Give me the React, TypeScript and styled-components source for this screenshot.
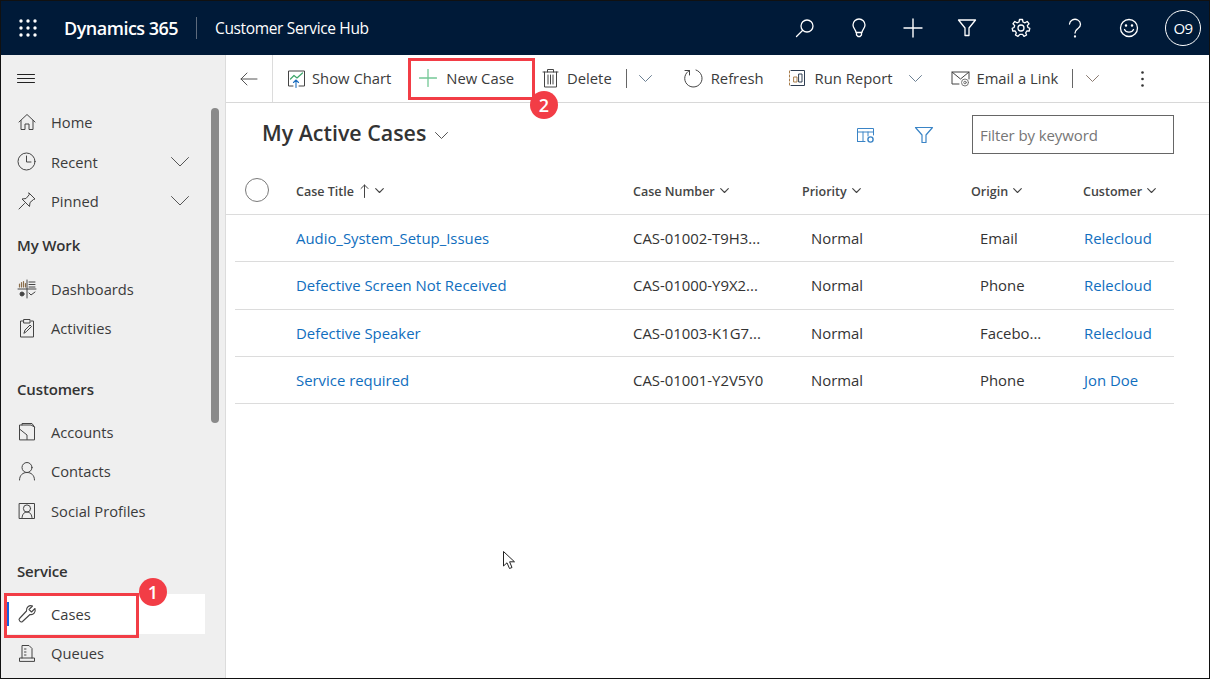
import { ReactNode } from 'react';
import styled, { createGlobalStyle } from 'styled-components';

const GlobalStyle = createGlobalStyle`
    html, body { margin: 0; padding: 0; background: #fff; }
    body { font-family: "Open Sans", "Noto Sans", "Liberation Sans", sans-serif; color: #333; }
    * { box-sizing: border-box; }
`;

// Estrutura geral
const Frame = styled.div`
    position: relative;
    width: 1210px;
    height: 679px;
    border: 1px solid #111;
    overflow: hidden;
    display: flex;
    flex-direction: column;
`;

const Header = styled.header`
    height: 54px;
    flex: none;
    background: #001a38;
    color: #fff;
    display: flex;
    align-items: center;
`;

const Waffle = styled.div`
    width: 63px;
    padding-left: 18px;
    display: flex;
`;

const Brand = styled.div`
    font-size: 18px;
    font-weight: 600;
    letter-spacing: -0.5px;
    width: 132px;
`;

const HeaderDivider = styled.div`
    width: 1px;
    height: 22px;
    background: #5d6a7c;
`;

const AppName = styled.div`
    font-size: 15.5px;
    margin-left: 18px;
    letter-spacing: -0.35px;
    flex: 1;
`;

const HeaderButton = styled.div`
    width: 54px;
    height: 54px;
    display: flex;
    align-items: center;
    justify-content: center;
`;

const Avatar = styled.div`
    width: 36px;
    height: 36px;
    margin: 0 8px 0 9px;
    border: 1px solid #fff;
    border-radius: 50%;
    display: flex;
    align-items: center;
    justify-content: center;
    font-size: 15px;
    letter-spacing: -0.5px;
`;

const Body = styled.div`
    flex: 1;
    display: flex;
    min-height: 0;
`;

// Menu lateral
const Sidebar = styled.nav`
    position: relative;
    width: 225px;
    flex: none;
    background: #efefef;
    border-right: 1px solid #dcdcdc;
    overflow: hidden;
`;

const Hamburger = styled.div`
    height: 47.6px;
    padding-left: 16px;
    display: flex;
    align-items: center;
`;

const Scrollbar = styled.div`
    position: absolute;
    left: 210px;
    top: 53px;
    width: 8px;
    height: 315px;
    border-radius: 4px;
    background: #8a8a8a;
`;

const SectionTitle = styled.div<{ $gap?: number }>`
    height: 48.4px;
    margin-top: ${p => p.$gap ?? 0}px;
    padding: 1px 0 0 16px;
    display: flex;
    align-items: center;
    font-size: 15px;
    font-weight: 600;
    letter-spacing: -0.15px;
    color: #333;
`;

const NavRow = styled.div<{ $active?: boolean }>`
    position: relative;
    height: 39.4px;
    width: 199px;
    margin-left: 5px;
    padding-left: 11px;
    display: flex;
    align-items: center;
    font-size: 14.7px;
    color: #3b3b3b;
    background: ${p => (p.$active ? '#fff' : 'transparent')};
    &::before {
        content: '';
        display: ${p => (p.$active ? 'block' : 'none')};
        position: absolute;
        left: 1px;
        top: 8px;
        bottom: 8px;
        width: 2px;
        background: #1160e0;
    }
`;

const NavIcon = styled.span`
    width: 20px;
    height: 20px;
    margin-right: 14px;
    display: flex;
    align-items: center;
    justify-content: center;
`;

const NavChevron = styled.span`
    position: absolute;
    left: 165px;
    top: 15px;
    display: flex;
`;

// Área principal
const Main = styled.main`
    flex: 1;
    min-width: 0;
`;

const Toolbar = styled.div`
    height: 48px;
    border-bottom: 1px solid #d8d8d8;
    display: flex;
    align-items: center;
`;

const BackCell = styled.div`
    width: 47px;
    height: 47px;
    border-right: 1px solid #dcdcdc;
    display: flex;
    align-items: center;
    justify-content: center;
    flex: none;
`;

const ToolItem = styled.div<{ $left: number; $gap: number }>`
    margin: 0 0 1px ${p => p.$left}px;
    display: flex;
    align-items: center;
    gap: ${p => p.$gap}px;
    font-size: 14.8px;
    color: #3b3b3b;
    white-space: nowrap;
    flex: none;
`;

const ToolSeparator = styled.div<{ $left: number }>`
    width: 1px;
    height: 19px;
    margin-left: ${p => p.$left}px;
    background: #666;
    flex: none;
`;

const ToolIcon = styled.span<{ $left: number }>`
    margin-left: ${p => p.$left}px;
    display: flex;
    flex: none;
`;

const ViewBar = styled.div`
    height: 63px;
    padding: 0 35px 0 36px;
    display: flex;
    align-items: center;
`;

const ViewTitle = styled.h1`
    margin: -5px 0 0;
    font-size: 21.4px;
    font-weight: 600;
    color: #333;
`;

const ViewChevron = styled.span`
    margin: 2px 0 0 9px;
    display: flex;
    flex: 1;
`;

const ViewAction = styled.span<{ $right: number }>`
    margin-right: ${p => p.$right}px;
    display: flex;
`;

const FilterBox = styled.div`
    width: 202px;
    height: 39px;
    border: 1px solid #666;
    padding-left: 7px;
    display: flex;
    align-items: center;
    font-size: 15px;
    letter-spacing: -0.1px;
    color: #767676;
`;

// Tabela
const columns = '61px 337px 169px 169px 112px 91px';

const HeadRow = styled.div`
    height: 49px;
    padding-left: 9px;
    border-bottom: 1px solid #dcdcdc;
    display: grid;
    grid-template-columns: ${columns};
    align-items: center;
`;

const HeadCheck = styled.div`
    width: 24px;
    height: 24px;
    margin-left: 10px;
    border: 1px solid #7a7a7a;
    border-radius: 50%;
`;

const HeadCell = styled.div<{ $gap?: number }>`
    padding-top: 2px;
    display: flex;
    align-items: center;
    gap: ${p => p.$gap ?? 5}px;
    font-size: 12.5px;
    font-weight: 600;
    color: #444;
`;

const DataRow = styled.div`
    height: 47.3px;
    margin-left: 9px;
    width: 939px;
    border-bottom: 1px solid #dcdcdc;
    display: grid;
    grid-template-columns: ${columns};
    align-items: center;
    font-size: 14.9px;
    color: #333;
`;

const Cell = styled.div<{ $indent?: number }>`
    padding-left: ${p => p.$indent ?? 0}px;
    white-space: nowrap;
`;

const LinkCell = styled(Cell)`
    color: #106ebe;
`;

// Marcações sobre o print
const Callout = styled.div<{ $x: number; $y: number; $w: number; $h: number }>`
    position: absolute;
    left: ${p => p.$x}px;
    top: ${p => p.$y}px;
    width: ${p => p.$w}px;
    height: ${p => p.$h}px;
    border: 3px solid #f23d46;
`;

const Badge = styled.div<{ $x: number; $y: number }>`
    position: absolute;
    left: ${p => p.$x}px;
    top: ${p => p.$y}px;
    width: 28px;
    height: 28px;
    border-radius: 50%;
    background: #f23d46;
    color: #fff;
    display: flex;
    align-items: center;
    justify-content: center;
    font-size: 18px;
    font-weight: 600;
`;

const Pointer = styled.svg`
    position: absolute;
    left: 501px;
    top: 549px;
`;

// Ícones
type GlyphProps = { size?: number; w?: number; h?: number; color?: string; stroke?: number; children: ReactNode };

function Glyph({ size = 20, w, h, color = '#444', stroke = 1, children }: GlyphProps) {
    const width = w ?? size;
    const height = h ?? size;
    return (
        <svg width={width} height={height} viewBox={`0 0 ${width} ${height}`} fill="none" stroke={color} strokeWidth={stroke} strokeLinecap="round" strokeLinejoin="round">
            {children}
        </svg>
    );
}

const Chevron = ({ w = 18, color = '#555' }: { w?: number; color?: string }) => (
    <Glyph w={w} h={w / 2 + 1} color={color}>
        <path d={`M0.5 0.5L${w / 2} ${w / 2}L${w - 0.5} 0.5`} />
    </Glyph>
);

const SmallCaret = () => (
    <Glyph w={9} h={6} color="#444" stroke={1.1}>
        <path d="M0.7 0.7L4.5 4.5L8.3 0.7" />
    </Glyph>
);

const WaffleIcon = () => (
    <svg width="18" height="18" viewBox="0 0 18 18" fill="#fff">
        {[2, 9, 16].map(y => [2, 9, 16].map(x => <circle key={`${x}-${y}`} cx={x} cy={y} r="1.7" />))}
    </svg>
);

const icons = {
    home: <Glyph><path d="M2 10L10 2.5L18 10M4 8.5V17.5H8V12H12V17.5H16V8.5" /></Glyph>,
    clock: <Glyph><circle cx="9.5" cy="9.5" r="8.5" /><path d="M9.5 4V10H14" /></Glyph>,
    pin: <Glyph><path d="M12 2L18 8L16.5 8.5L13 11.5L12.5 15.5L5 8L9 7.5L12 4ZM7.5 12.5L2 18" /></Glyph>,
    dashboards: (
        <Glyph>
            <path d="M10 1V19M1 10H19M12 3H18M12 5.5H18M12 8H18" />
            <path d="M2.5 8V5M4.5 8V3.5M6.5 8V2.5M8.5 8V4.5" stroke="#8a6d4b" strokeWidth="1.2" />
            <circle cx="5" cy="15" r="2" fill="#444" />
            <path d="M12 14L14 16L18 13" />
        </Glyph>
    ),
    activities: <Glyph><path d="M6 3H3.5V19H16.5V3H14M7 1.5H13V5H7ZM7 15L8 12L13 7L14.5 8.5L9.5 13.5Z" /></Glyph>,
    accounts: <Glyph><path d="M2.5 17.5V3H14L17.5 5V17.5ZM2.5 7L10 13V17.5M5 3V1.5H15L17.5 5" /></Glyph>,
    contacts: <Glyph><circle cx="10" cy="6.5" r="5" /><path d="M2.5 19C2.5 14 6 11.5 10 11.5S17.5 14 17.5 19" /></Glyph>,
    social: <Glyph><rect x="2.5" y="2.5" width="15" height="15" /><circle cx="10" cy="7.5" r="3.6" /><path d="M5 17.5C5 13.5 7 11 10 11S15 13.5 15 17.5" /></Glyph>,
    wrench: <Glyph stroke={1.1}><path d="M18 4.5L14.5 8L12 5.5L15.5 2C12.5 0.8 9 3 9.5 7L2.5 14.5C1 16 3.8 19 5.5 17.5L13 10.5C16.5 11.2 19 8 18 4.5Z" /></Glyph>,
    queues: <Glyph><path d="M5 15V2.5H12L15 5.5V15M2.5 18V15H17.5V18ZM7.5 6H9M7.5 9H9M7.5 12H9" /></Glyph>,
    showChart: (
        <Glyph w={19} h={19}>
            <path d="M6 17H1.5V2H17.5V17H12" />
            <path d="M3.5 10L7 6.5L10 9L15.5 4" stroke="#3fa66b" strokeWidth="1.2" />
            <path d="M9 18.5V11M6.5 13.5L9 11L11.5 13.5" stroke="#1f6fc0" strokeWidth="1.1" />
        </Glyph>
    ),
    trash: <Glyph w={17} h={20}><path d="M1 4H16M5.5 4V1.5H11.5V4M2.5 4V19H14.5V4M6 7V16M8.5 7V16M11 7V16" /></Glyph>,
    refresh: <Glyph><path d="M6.5 2.5A8.7 8.7 0 1 0 13 2M6.5 7V2.5H2" /></Glyph>,
    report: (
        <Glyph w={18} h={18}>
            <path d="M3 1.5H16.5V16.5H3" stroke="#2f3e52" />
            <path d="M1.5 2V16" strokeDasharray="2 2" stroke="#a87c4a" />
            <rect x="6" y="8" width="3" height="5" stroke="#a87c4a" />
            <rect x="11" y="5" width="3" height="8" stroke="#2f3e52" />
        </Glyph>
    ),
    email: (
        <Glyph w={19} h={17}>
            <path d="M8 14H1V2H18V9M1 2L9.5 9L18 2" />
            <circle cx="14" cy="12.5" r="3.5" stroke="#777" />
            <circle cx="14" cy="12.5" r="1.3" stroke="#777" />
        </Glyph>
    ),
    tableSettings: (
        <Glyph w={19} h={18} color="#3a84c6">
            <path d="M1.5 15.5V2.5H17.5V9M1.5 6H17.5M1.5 15.5H9M7 6V15.5M12 6V10" />
            <circle cx="14.5" cy="13.5" r="2.6" strokeWidth="1.4" />
        </Glyph>
    ),
};

const navGroups = [
    { items: [['Home', icons.home], ['Recent', icons.clock, true], ['Pinned', icons.pin, true]] },
    { title: 'My Work', items: [['Dashboards', icons.dashboards], ['Activities', icons.activities]] },
    { title: 'Customers', gap: 16, items: [['Accounts', icons.accounts], ['Contacts', icons.contacts], ['Social Profiles', icons.social]] },
    { title: 'Service', gap: 15.4, items: [['Cases', icons.wrench], ['Queues', icons.queues]] },
] as { title?: string; gap?: number; items: [string, ReactNode, boolean?][] }[];

const cases = [
    ['Audio_System_Setup_Issues', 'CAS-01002-T9H3...', 'Normal', 'Email', 'Relecloud'],
    ['Defective Screen Not Received', 'CAS-01000-Y9X2...', 'Normal', 'Phone', 'Relecloud'],
    ['Defective Speaker', 'CAS-01003-K1G7...', 'Normal', 'Facebo...', 'Relecloud'],
    ['Service required', 'CAS-01001-Y2V5Y0', 'Normal', 'Phone', 'Jon Doe'],
];

export default function App() {
    return (
        <Frame>
            <GlobalStyle />
            <Header>
                <Waffle><WaffleIcon /></Waffle>
                <Brand>Dynamics 365</Brand>
                <HeaderDivider />
                <AppName>Customer Service Hub</AppName>
                <HeaderButton>
                    <Glyph color="#fff" stroke={1.3}><circle cx="12" cy="8" r="6" /><path d="M7.5 12.5L1.5 18.5" /></Glyph>
                </HeaderButton>
                <HeaderButton>
                    <Glyph color="#fff" stroke={1.3}><path d="M7 14.5C7 11.5 4 10.5 4 7A6 6 0 0 1 16 7C16 10.5 13 11.5 13 14.5ZM7.5 14.5V17L9 18.5H11L12.5 17V14.5" /></Glyph>
                </HeaderButton>
                <HeaderButton>
                    <Glyph color="#fff" stroke={1.4}><path d="M10 1V19M1 10H19" /></Glyph>
                </HeaderButton>
                <HeaderButton>
                    <Glyph color="#fff" stroke={1.3}><path d="M1.5 2H18.5L12 10V17.5H8V10Z" /></Glyph>
                </HeaderButton>
                <HeaderButton>
                    <Glyph color="#fff" stroke={1.3}>
                        <circle cx="10" cy="10" r="3" />
                        <path d="M8.5 1.5H11.5L12 4L14 4.8L16.2 3.5L18 5.7L16.3 7.6L17 9.5L18.8 10.3L18.2 13L15.8 13L14.7 14.9L15.6 17L13 18.3L11.6 16.4H8.9L7 18.3L4.4 17L5.3 14.9L4.2 13L1.8 13L1.2 10.3L3 9.5L3.7 7.6L2 5.7L3.8 3.5L6 4.8L8 4Z" />
                    </Glyph>
                </HeaderButton>
                <HeaderButton>
                    <Glyph color="#fff" stroke={1.3}>
                        <path d="M4.5 6A5.5 5 0 1 1 13 10.5C11 12 10 12.5 10 15" />
                        <circle cx="10" cy="18.5" r="0.5" fill="#fff" />
                    </Glyph>
                </HeaderButton>
                <HeaderButton>
                    <Glyph color="#fff" stroke={1.3}><circle cx="10" cy="10" r="8.5" /><path d="M5.5 11.5C7 15 13 15 14.5 11.5" /><circle cx="7" cy="7.5" r="0.6" fill="#fff" /><circle cx="13" cy="7.5" r="0.6" fill="#fff" /></Glyph>
                </HeaderButton>
                <Avatar>O9</Avatar>
            </Header>
            <Body>
                <Sidebar>
                    <Hamburger>
                        <Glyph w={18} h={9} color="#222"><path d="M0.5 0.5H17.5M0.5 4.5H17.5M0.5 8.5H17.5" /></Glyph>
                    </Hamburger>
                    {navGroups.map((group, i) => (
                        <div key={i}>
                            {group.title && <SectionTitle $gap={group.gap}>{group.title}</SectionTitle>}
                            {group.items.map(([label, icon, expandable]) => (
                                <NavRow key={label} $active={label === 'Cases'}>
                                    <NavIcon>{icon}</NavIcon>
                                    {label}
                                    {expandable && <NavChevron><Chevron /></NavChevron>}
                                </NavRow>
                            ))}
                        </div>
                    ))}
                    <Scrollbar />
                </Sidebar>
                <Main>
                    <Toolbar>
                        <BackCell>
                            <Glyph w={18} h={14} color="#555"><path d="M17 7H1M7 1L1 7L7 13" /></Glyph>
                        </BackCell>
                        <ToolItem $left={14} $gap={6}>{icons.showChart}Show Chart</ToolItem>
                        <ToolItem $left={28} $gap={9}>
                            <Glyph w={18} h={18} color="#74c896" stroke={1.3}><path d="M9 0.5V17.5M0.5 9H17.5" /></Glyph>
                            New Case
                        </ToolItem>
                        <ToolItem $left={28} $gap={8}>{icons.trash}Delete</ToolItem>
                        <ToolSeparator $left={14} />
                        <ToolIcon $left={12}><Chevron w={13} color="#6b7f92" /></ToolIcon>
                        <ToolItem $left={31} $gap={8}>{icons.refresh}Refresh</ToolItem>
                        <ToolItem $left={24} $gap={9}>{icons.report}Run Report</ToolItem>
                        <ToolIcon $left={17}><Chevron w={13} color="#6b7f92" /></ToolIcon>
                        <ToolItem $left={29} $gap={6}>{icons.email}Email a Link</ToolItem>
                        <ToolSeparator $left={14} />
                        <ToolIcon $left={13}><Chevron w={13} color="#8a7a70" /></ToolIcon>
                        <ToolIcon $left={42}>
                            <svg width="3" height="16" viewBox="0 0 3 16" fill="#333"><circle cx="1.5" cy="1.5" r="1.3" /><circle cx="1.5" cy="8" r="1.3" /><circle cx="1.5" cy="14.5" r="1.3" /></svg>
                        </ToolIcon>
                    </Toolbar>
                    <ViewBar>
                        <ViewTitle>My Active Cases</ViewTitle>
                        <ViewChevron><Chevron w={13} /></ViewChevron>
                        <ViewAction $right={39}>{icons.tableSettings}</ViewAction>
                        <ViewAction $right={38}>
                            <Glyph w={20} h={18} color="#3a84c6" stroke={1.2}><path d="M1.5 1.5H18.5L12 9V16.5H8V9Z" /></Glyph>
                        </ViewAction>
                        <FilterBox>Filter by keyword</FilterBox>
                    </ViewBar>
                    <HeadRow>
                        <HeadCheck />
                        <HeadCell $gap={6}>
                            Case Title
                            <Glyph w={9} h={14} color="#444"><path d="M4.5 13.5V1M1 4.5L4.5 1L8 4.5" /></Glyph>
                            <SmallCaret />
                        </HeadCell>
                        <HeadCell>Case Number<SmallCaret /></HeadCell>
                        <HeadCell>Priority<SmallCaret /></HeadCell>
                        <HeadCell>Origin<SmallCaret /></HeadCell>
                        <HeadCell>Customer<SmallCaret /></HeadCell>
                    </HeadRow>
                    {cases.map(([title, number, priority, origin, customer]) => (
                        <DataRow key={number}>
                            <span />
                            <LinkCell>{title}</LinkCell>
                            <Cell>{number}</Cell>
                            <Cell $indent={9}>{priority}</Cell>
                            <Cell $indent={9}>{origin}</Cell>
                            <LinkCell $indent={1}>{customer}</LinkCell>
                        </DataRow>
                    ))}
                </Main>
            </Body>
            <Callout $x={3} $y={592} $w={135} $h={45} />
            <Badge $x={138} $y={577}>1</Badge>
            <Callout $x={407} $y={57} $w={127} $h={42} />
            <Badge $x={529} $y={90}>2</Badge>
            <Pointer width="14" height="21" viewBox="0 0 14 21" fill="#fff" stroke="#222" strokeWidth="1">
                <path d="M1.5 1.5V16L5 12.8L7.5 18.5L10 17.5L7.6 11.8H12.5Z" />
            </Pointer>
        </Frame>
    );
}
